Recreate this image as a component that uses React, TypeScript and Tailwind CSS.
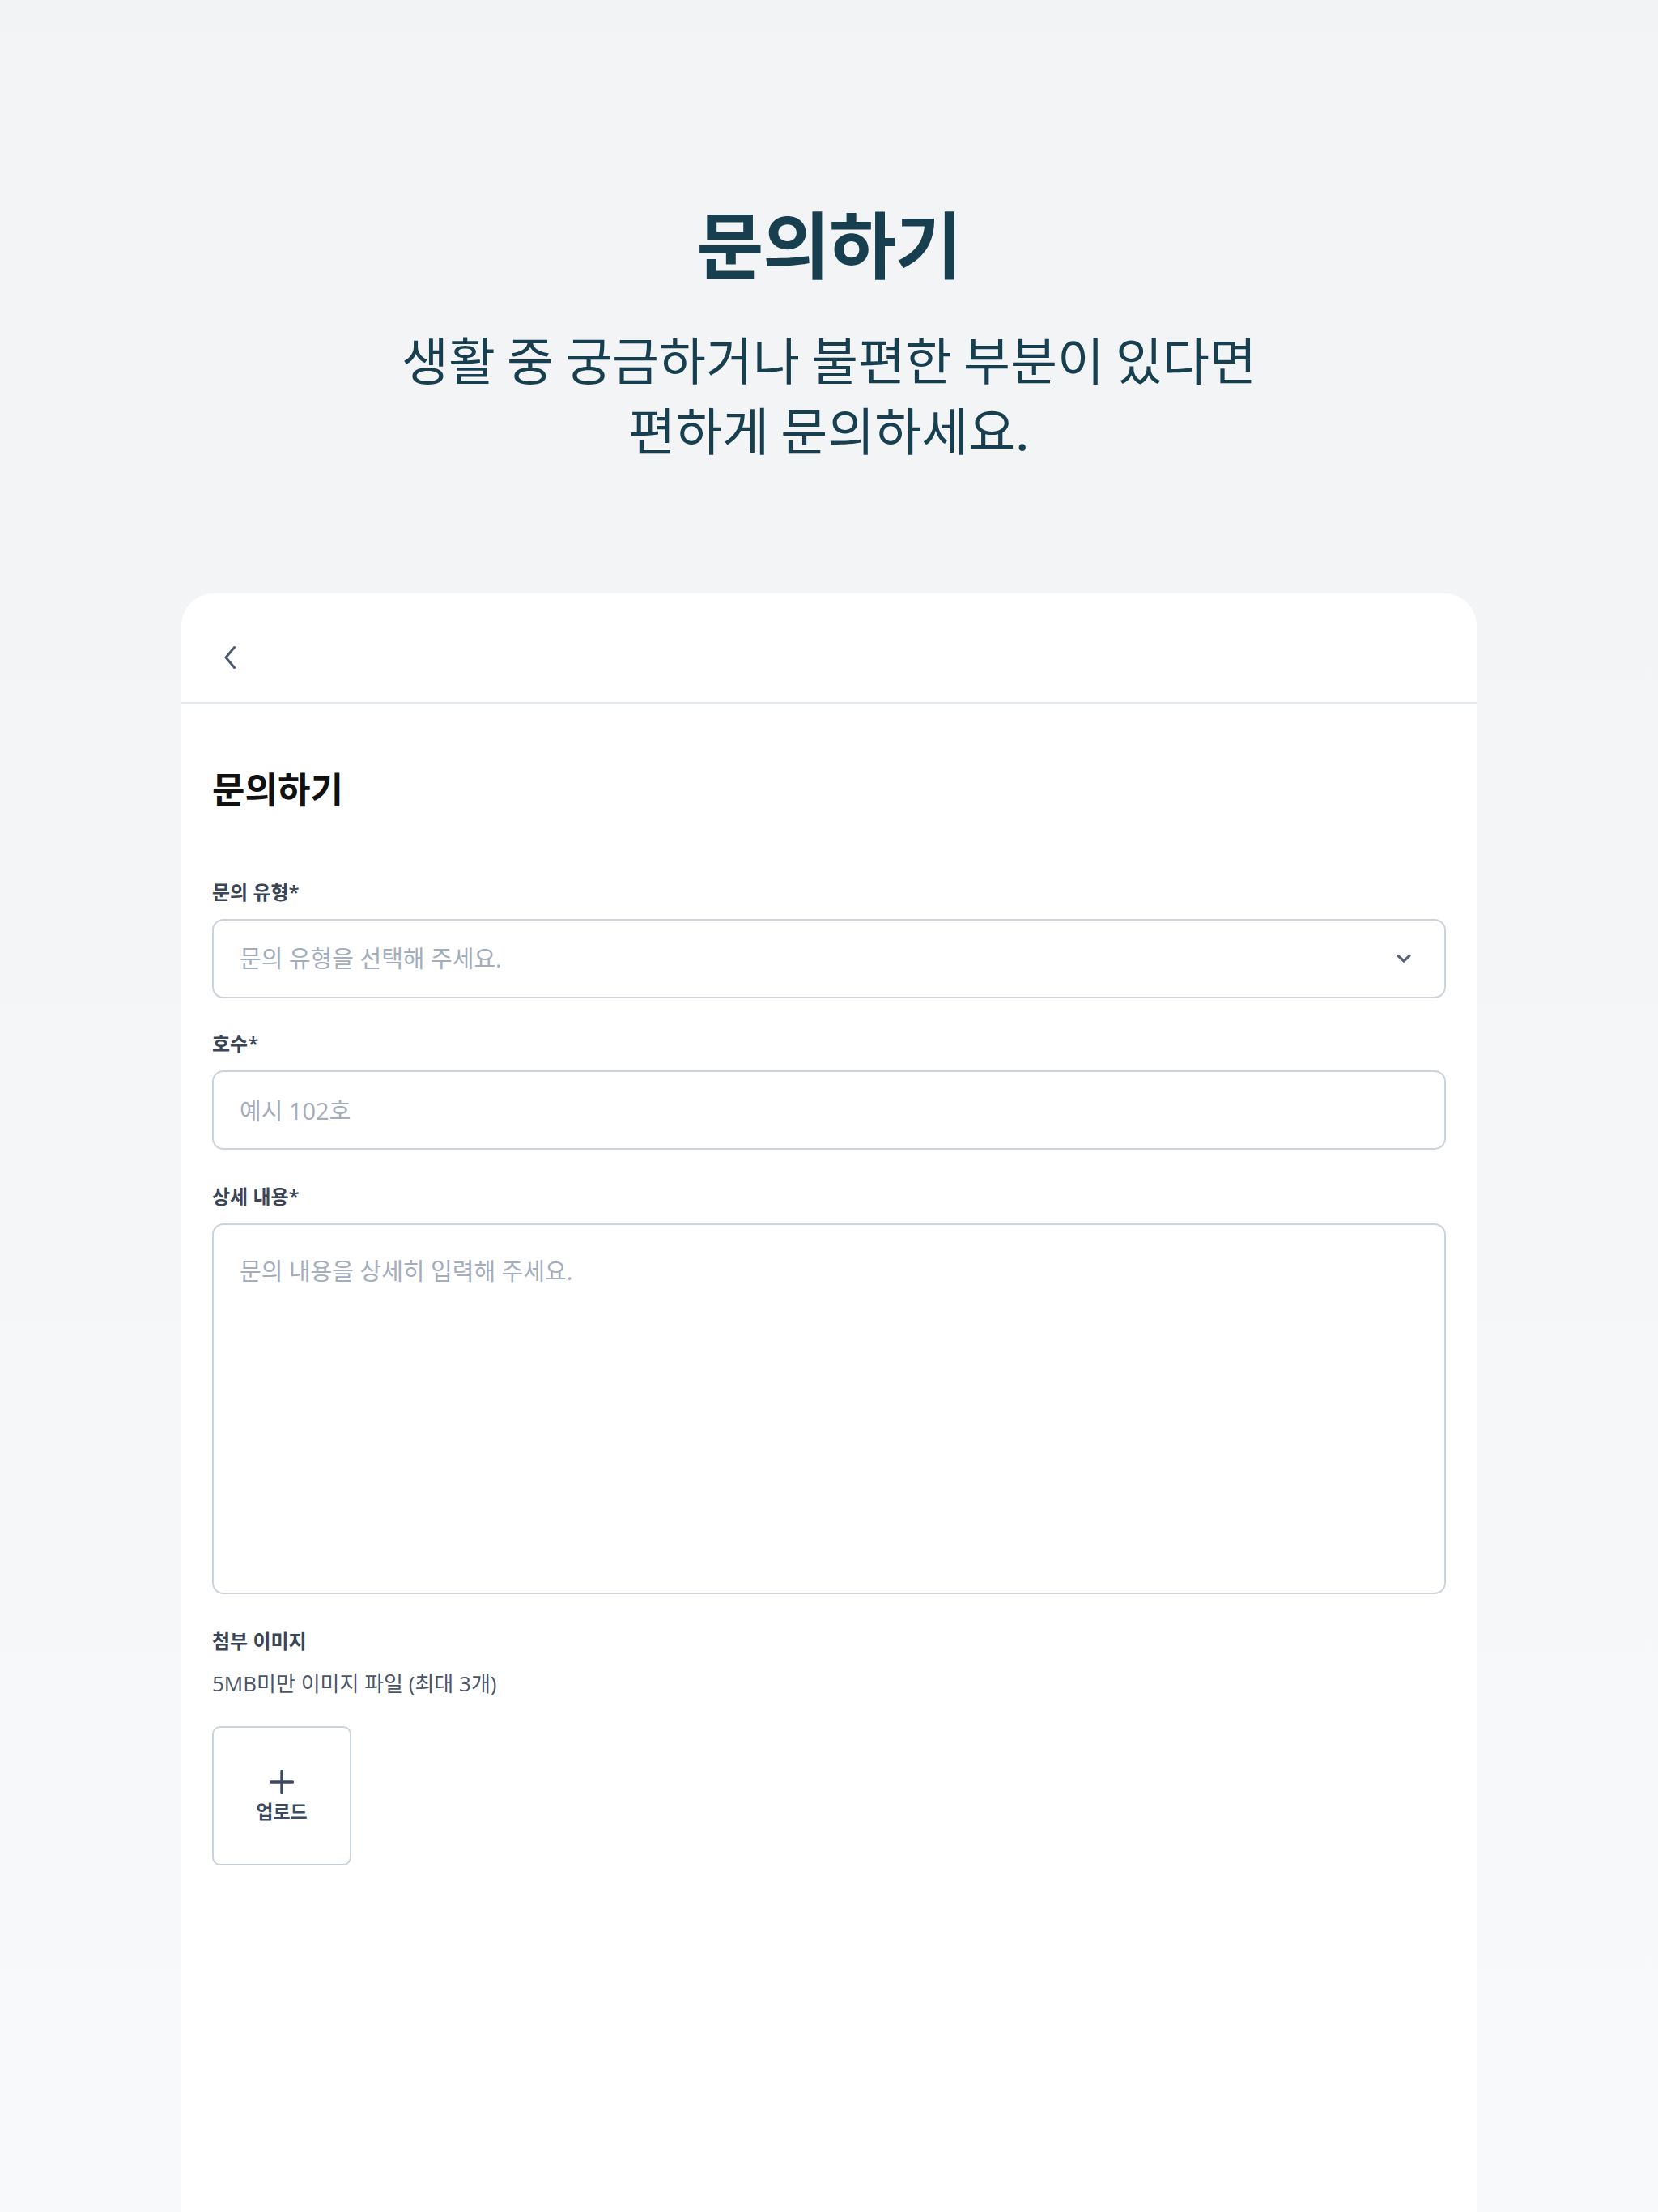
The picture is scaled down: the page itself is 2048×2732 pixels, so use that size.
import React from "react";

const FONT = '"Open Sans", "Noto Sans CJK KR", "Noto Sans", sans-serif';
const KFONT = '"Noto Sans CJK KR", "Noto Sans", sans-serif';

function Label({ children }: { children: React.ReactNode }) {
  return (
    <div className="text-[24px] leading-[32px] font-semibold text-[#3a4557] mb-[17px]">{children}</div>
  );
}

export default function App() {
  return (
    <div
      className="h-[2732px] w-full flex flex-col items-center bg-gradient-to-b from-[#f1f3f5] to-[#f8f9fb]"
      style={{ fontFamily: FONT }}
    >
      <section className="flex flex-col items-center pt-[248px] pb-[161px]" style={{ fontFamily: KFONT }}>
        <h1 className="text-[90px] leading-[100px] font-bold text-[#173f4f] tracking-[-1px]">문의하기</h1>
        <p className="mt-[50px] text-[63px] leading-[87px] text-[#173f4f] text-center font-normal">
          생활 중 궁금하거나 불편한 부분이 있다면
          <br />
          편하게 문의하세요.
        </p>
      </section>

      <main className="w-[1600px] flex-1 bg-white rounded-t-[40px] flex flex-col">
        <header className="h-[136px] pt-[24px] pl-[51px] flex items-center border-b-2 border-[#e2e8f0]">
          <svg width="18" height="32" viewBox="0 0 18 32" fill="none">
            <path d="M14.5 3.5 L4 16 L14.5 28.5" stroke="#4a5a74" strokeWidth="3" strokeLinecap="round" strokeLinejoin="round" />
          </svg>
        </header>

        <div className="px-[38px] pt-[76px] flex flex-col">
          <h2 className="text-[44px] leading-[56px] font-bold text-[#111111] mb-[85px]" style={{ fontFamily: KFONT }}>
            문의하기
          </h2>

          <Label>문의 유형*</Label>
          <div className="h-[98px] border-2 border-[#cdd3dc] rounded-[14px] flex items-center justify-between pl-[32px] pr-[40px]">
            <span className="text-[29px] text-[#a3adbd]">문의 유형을 선택해 주세요.</span>
            <svg width="20" height="12" viewBox="0 0 20 12" fill="none">
              <path d="M3 2.5 L10 9 L17 2.5" stroke="#5a6479" strokeWidth="3.2" strokeLinecap="round" strokeLinejoin="round" />
            </svg>
          </div>

          <div className="mt-[40px]">
            <Label>호수*</Label>
          </div>
          <input
            className="h-[98px] border-2 border-[#cdd3dc] rounded-[14px] pl-[32px] pr-[32px] text-[29px] text-[#333] placeholder:text-[#a3adbd] outline-none bg-white"
            style={{ fontFamily: FONT }}
            placeholder="예시 102호"
          />

          <div className="mt-[42px]">
            <Label>상세 내용*</Label>
          </div>
          <textarea
            className="h-[458px] border-2 border-[#cdd3dc] rounded-[14px] pl-[32px] pr-[32px] pt-[37px] text-[29px] leading-[40px] text-[#333] placeholder:text-[#a3adbd] outline-none resize-none bg-white"
            style={{ fontFamily: FONT }}
            placeholder="문의 내용을 상세히 입력해 주세요."
          />

          <div className="mt-[42px] text-[24px] leading-[32px] font-semibold text-[#3a4557]">첨부 이미지</div>
          <div className="mt-[20px] text-[26px] leading-[32px] text-[#4a5568]">5MB미만 이미지 파일 (최대 3개)</div>

          <div className="mt-[37px] w-[172px] h-[172px] border-2 border-[#cdd3dc] rounded-[10px] flex flex-col items-center justify-center gap-[8px]">
            <svg width="30" height="30" viewBox="0 0 30 30" fill="none">
              <path d="M15 1.5 V28.5 M1.5 15 H28.5" stroke="#3d4a63" strokeWidth="3.4" strokeLinecap="round" />
            </svg>
            <span className="text-[23px] leading-[26px] font-semibold text-[#3d4a63]">업로드</span>
          </div>
        </div>
      </main>
    </div>
  );
}
